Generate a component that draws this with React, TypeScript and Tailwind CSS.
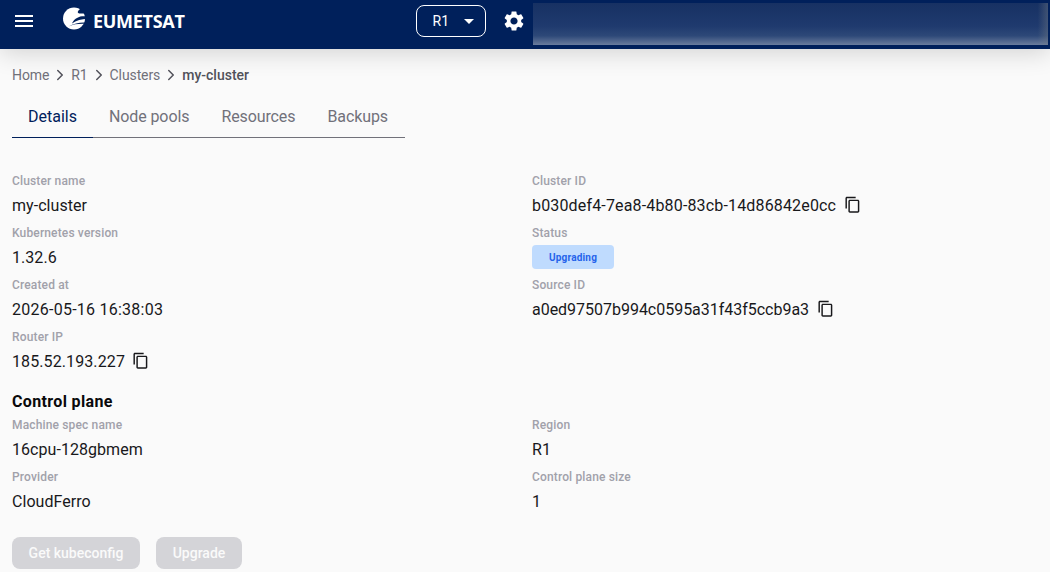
import { ChevronRight } from "lucide-react";

function CopyIcon() {
  return (
    <svg viewBox="0 0 24 24" className="w-[17.5px] h-[17.5px] shrink-0 -mt-[2px]" fill="#18181b">
      <path d="M16 1H4c-1.1 0-2 .9-2 2v14h2V3h12V1zm3 4H8c-1.1 0-2 .9-2 2v14c0 1.1.9 2 2 2h11c1.1 0 2-.9 2-2V7c0-1.1-.9-2-2-2zm0 16H8V7h11v14z" />
    </svg>
  );
}

function Field({ label, value, copy, spacing = "tracking-[0.05px]", children }: { label: string; value?: string; copy?: boolean; spacing?: string; children?: React.ReactNode }) {
  return (
    <div className="h-[52px] flex flex-col">
      <div className="h-[16px] mt-[1px] text-[12px] leading-[16px] tracking-[0.15px] font-medium text-[#a1a1aa]">{label}</div>
      {children ?? (
        <div className={`h-[24px] mt-[5px] flex items-center gap-[7.5px] text-[16px] leading-[24px] text-[#18181b] ${spacing}`}>
          <span>{value}</span>
          {copy && <CopyIcon />}
        </div>
      )}
    </div>
  );
}

function Crumb() {
  return <ChevronRight className="w-[18px] h-[18px] mx-[2px] text-[#52525b]" strokeWidth={2} />;
}

export default function App() {
  return (
    <div className="w-[1050px] h-[572px] overflow-hidden bg-[#fafafa] font-['Roboto',sans-serif] flex flex-col">
      <header className="relative z-10 h-[49px] pb-[7px] shrink-0 bg-[#00205b] flex items-center shadow-[0_4px_24px_rgba(0,0,0,0.16)]">
        <svg viewBox="0 0 24 24" className="ml-[12px] w-[24px] h-[24px]" fill="#fff">
          <path d="M3 18h18v-2H3v2zm0-5h18v-2H3v2zm0-7v2h18V6H3z" />
        </svg>
        <svg viewBox="0 0 24 24" className="ml-[27px] w-[24px] h-[24px] -mt-[4px]">
          <circle cx="11" cy="11.5" r="11" fill="#fff" />
          <path d="M24 0v6.500H17C15 6.500 14 5.500 15.500 3.500L19 0z" fill="#00205b" />
          <path d="M24 9.200V11.800C19 12 13 13.500 9 16.500 10.500 13 14 9.800 19 9.200z" fill="#00205b" />
          <path d="M24 15.500V17C17 16.500 11 17 5.500 19.500 11 16 18 15 24 15.500z" fill="#00205b" />
        </svg>
        <span className="ml-[6px] -mt-[1px] font-['Open_Sans',sans-serif] font-bold text-[18px] leading-[24px] text-white tracking-[-0.3px]">EUMETSAT</span>
        <div className="ml-[231px] w-[70px] h-[32px] rounded-[8px] border border-white flex items-center pl-[16px] text-white text-[14px]">
          <span>R1</span>
          <svg viewBox="0 0 24 24" className="ml-[8px] w-[24px] h-[24px]" fill="#fff"><path d="M7 10l5 5 5-5z" /></svg>
        </div>
        <svg viewBox="0 0 24 24" className="ml-[16px] w-[24px] h-[24px]" fill="#fff">
          <path d="M19.14 12.94c.04-.3.06-.61.06-.94 0-.32-.02-.64-.07-.94l2.03-1.58c.18-.14.23-.41.12-.61l-1.92-3.32c-.12-.22-.37-.29-.59-.22l-2.39.96c-.5-.38-1.03-.7-1.62-.94l-.36-2.54c-.04-.24-.24-.41-.48-.41h-3.84c-.24 0-.43.17-.47.41l-.36 2.54c-.59.24-1.13.57-1.62.94l-2.39-.96c-.22-.08-.47 0-.59.22L2.740 8.870c-.12.21-.08.47.12.61l2.030 1.580c-.05.3-.09.63-.09.94s.02.64.07.94l-2.030 1.580c-.18.14-.23.41-.12.61l1.920 3.320c.12.22.37.29.59.22l2.390-.96c.5.38 1.030.7 1.620.94l.36 2.540c.05.24.24.41.48.41h3.840c.24 0 .44-.17.47-.41l.36-2.540c.59-.24 1.130-.56 1.620-.94l2.390.96c.22.08.47 0 .59-.22l1.920-3.320c.12-.22.07-.47-.12-.61l-2.010-1.580zM12 15.600c-1.980 0-3.600-1.620-3.600-3.600s1.620-3.600 3.600-3.600 3.600 1.620 3.600 3.600-1.620 3.600-3.600 3.600z" />
        </svg>
        <div className="ml-[7px] w-[515px] h-[42px] self-start mt-[3px] bg-[linear-gradient(90deg,transparent_98%,rgba(110,120,130,0.45)_100%),linear-gradient(180deg,#173163_0%,#1f3a6e_55%,#2d4878_78%,#6a7c9d_100%)]" />
      </header>

      <nav className="mt-[16px] ml-[12px] flex items-center h-[20px] text-[14px] leading-[20px] text-[#71717a] tracking-[-0.1px]">
        <span>Home</span>
        <Crumb />
        <span>R1</span>
        <Crumb />
        <span>Clusters</span>
        <Crumb />
        <span className="font-medium text-[#52525b] tracking-normal">my-cluster</span>
      </nav>

      <div className="mt-[10px] ml-[12px] w-[393px] h-[43px] flex border-b border-[#71717a] text-[16px] text-[#71717a] whitespace-nowrap tracking-[-0.1px]">
        <div className="relative px-[16px] pt-[10px] text-[#00205b] tracking-normal">
          Details
          <div className="absolute left-0 right-0 bottom-[-1px] h-[1px] bg-[#00205b]" />
        </div>
        <div className="px-[16px] pt-[10px]">Node pools</div>
        <div className="px-[16px] pt-[10px]">Resources</div>
        <div className="px-[16px] pt-[10px]">Backups</div>
      </div>

      <div className="mt-[34px] px-[12px] grid grid-cols-[520px_1fr]">
        <Field label="Cluster name" value="my-cluster" />
        <Field label="Cluster ID" value="b030def4-7ea8-4b80-83cb-14d86842e0cc" copy spacing="tracking-[0.16px]" />
        <Field label="Kubernetes version" value="1.32.6" />
        <Field label="Status">
          <div className="mt-[4px] w-[82px] h-[24px] rounded-[4px] bg-[#bfdbfe] flex items-center justify-center text-[10px] tracking-[0.2px] font-bold text-[#2563eb]">Upgrading</div>
        </Field>
        <Field label="Created at" value="2026-05-16 16:38:03" spacing="tracking-[0.25px]" />
        <Field label="Source ID" value="a0ed97507b994c0595a31f43f5ccb9a3" copy spacing="tracking-[-0.02px]" />
        <Field label="Router IP" value="185.52.193.227" copy spacing="tracking-[0.1px]" />
        <div />
      </div>

      <h2 className="mt-[10px] ml-[12px] h-[24px] text-[16px] leading-[24px] tracking-[0.35px] font-bold text-[#09090b]">Control plane</h2>

      <div className="mt-[2px] px-[12px] grid grid-cols-[520px_1fr]">
        <Field label="Machine spec name" value="16cpu-128gbmem" />
        <Field label="Region" value="R1" />
        <Field label="Provider" value="CloudFerro" />
        <Field label="Control plane size" value="1" />
      </div>

      <div className="mt-[17px] ml-[12px] flex gap-[16px]">
        <div className="h-[32px] w-[128px] rounded-[8px] bg-[#d4d4d8] flex items-center justify-center text-[14px] font-medium text-[#fafafa]">Get kubeconfig</div>
        <div className="h-[32px] w-[86px] rounded-[8px] bg-[#d4d4d8] flex items-center justify-center text-[14px] font-medium text-[#fafafa]">Upgrade</div>
      </div>
    </div>
  );
}
